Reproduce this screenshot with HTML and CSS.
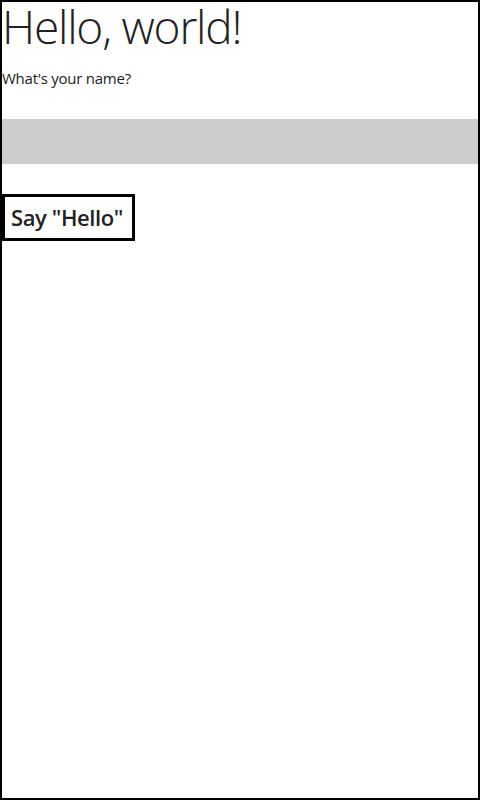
FILE: index.html
```html
<!DOCTYPE html>
<html lang="en">
<head>
<meta charset="utf-8">
<title>Hello, world!</title>
<link rel="stylesheet" href="styles.css">
</head>
<body>
<div class="page">
  <h1 class="title">Hello, world!</h1>
  <p class="prompt">What's your name?</p>
  <div class="name-input" role="textbox" aria-label="Name"></div>
  <div class="actions">
    <button class="say-btn" type="button">Say "Hello"</button>
  </div>
</div>
</body>
</html>
```
FILE: styles.css
```css
html, body {
  margin: 0;
  padding: 0;
  background: #ffffff;
}
.page {
  box-sizing: border-box;
  width: 480px;
  height: 800px;
  border: 2px solid #000000;
  display: flex;
  flex-direction: column;
  font-family: "Open Sans", "Liberation Sans", sans-serif;
  color: #222222;
}
.title {
  margin: 0;
  font-size: 46px;
  font-weight: 300;
  line-height: 48px;
  letter-spacing: -1.2px;
}
.prompt {
  margin: 18px 0 0;
  font-size: 15px;
  font-weight: 400;
  line-height: 20px;
  letter-spacing: -0.25px;
}
.name-input {
  margin-top: 31px;
  height: 45px;
  background: #cccccc;
}
.actions {
  margin-top: 30px;
  display: flex;
}
.say-btn {
  box-sizing: border-box;
  height: 47px;
  margin: 0;
  padding: 0 9px 0 6px;
  border: 3px solid #000000;
  background: #ffffff;
  color: #222222;
  font-family: "Open Sans", "Liberation Sans", sans-serif;
  font-size: 22px;
  font-weight: 600;
  line-height: 41px;
  letter-spacing: -0.4px;
}
```
